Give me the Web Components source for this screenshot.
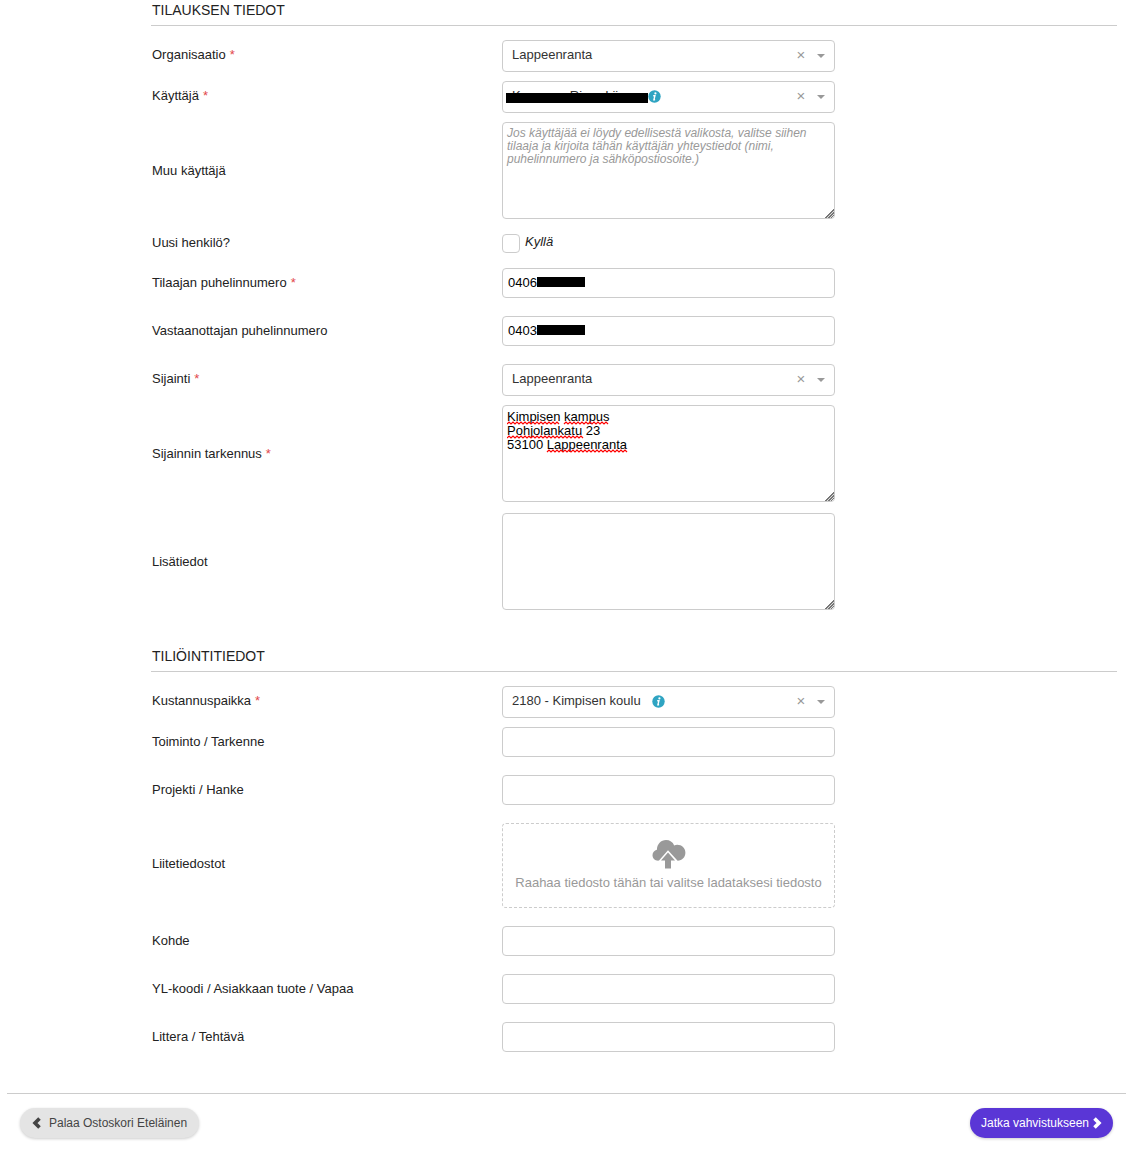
<!DOCTYPE html>
<html lang="fi">
<head>
<meta charset="utf-8">
<title>Tilauksen tiedot</title>
<style>
    body {
        margin: 0;
        background: #fff;
        color: #222;
        font: 13px/16px "Liberation Sans", Arial, sans-serif;
    }
</style>
</head>
<body>
<order-page>
    <form-section heading="Tilauksen tiedot">
        <select-field label="Organisaatio" required value="Lappeenranta"></select-field>
        <select-field label="Käyttäjä" required value="Kxxxxxxx Rixxx Liixx" info masked></select-field>
        <area-field label="Muu käyttäjä" placeholder="Jos käyttäjää ei löydy edellisestä valikosta, valitse siihen&#10;tilaaja ja kirjoita tähän käyttäjän yhteystiedot (nimi,&#10;puhelinnumero ja sähköpostiosoite.)"></area-field>
        <check-field label="Uusi henkilö?" text="Kyllä"></check-field>
        <text-field label="Tilaajan puhelinnumero" required value="0406000000" masked></text-field>
        <text-field label="Vastaanottajan puhelinnumero" value="0403000000" masked></text-field>
        <select-field label="Sijainti" required value="Lappeenranta"></select-field>
        <area-field label="Sijainnin tarkennus" required value="Kimpisen kampus&#10;Pohjolankatu 23&#10;53100 Lappeenranta" misspelt="Kimpisen kampus Pohjolankatu Lappeenranta"></area-field>
        <area-field label="Lisätiedot"></area-field>
    </form-section>
    <form-section heading="Tiliöintitiedot">
        <select-field label="Kustannuspaikka" required value="2180 - Kimpisen koulu" info></select-field>
        <text-field label="Toiminto / Tarkenne"></text-field>
        <text-field label="Projekti / Hanke"></text-field>
        <file-field label="Liitetiedostot" text="Raahaa tiedosto tähän tai valitse ladataksesi tiedosto"></file-field>
        <text-field label="Kohde"></text-field>
        <text-field label="YL-koodi / Asiakkaan tuote / Vapaa"></text-field>
        <text-field label="Littera / Tehtävä"></text-field>
    </form-section>
    <pill-button slot="footer" kind="back">Palaa Ostoskori Eteläinen</pill-button>
    <pill-button slot="footer" kind="next">Jatka vahvistukseen</pill-button>
</order-page>

<script>
const infoIcon = `<svg class="info" width="13" height="13" viewBox="0 0 13 13" aria-hidden="true">
  <circle cx="6.5" cy="6.5" r="6.2" fill="#2fa4c2"/>
  <circle cx="7.4" cy="3.4" r="1.1" fill="#fff"/>
  <path d="M5.2 5.8h1.7l-1 4h1.2" fill="none" stroke="#fff" stroke-width="1.4"/>
</svg>`;
const caretIcon = `<svg class="caret" width="8" height="4" viewBox="0 0 8 4" aria-hidden="true">
  <path d="M0 0h8L4 4z" fill="#999"/>
</svg>`;
const cloudIcon = `<svg width="34" height="30" viewBox="0 0 34 30" aria-hidden="true">
  <path d="M7 21.600C3 22 .5 19.400.5 16.200c0-2.800 1.800-4.800 4.400-5.400C5 5 9 1 14 1c3.800 0 6.800 2 8.200 5.400C23.200 6 24.200 5.800 25.200 5.800c4.600 0 8.200 3.400 8.200 8 0 4.400-3.200 7.700-7.800 7.900L16 11.300z" fill="#999"/>
  <path d="M16 13.600l7 7.800h-4v8.200h-6v-8.200H9z" fill="#999"/>
</svg>`;
const leftIcon = `<svg width="9" height="12" viewBox="0 0 9 12" aria-hidden="true">
  <path d="M7.500 1.500L3 6l4.500 4.500" fill="none" stroke="currentColor" stroke-width="3.600"/>
</svg>`;
const rightIcon = `<svg width="9" height="12" viewBox="0 0 9 12" aria-hidden="true">
  <path d="M1.500 1.500L6 6l-4.500 4.500" fill="none" stroke="currentColor" stroke-width="3.600"/>
</svg>`;

class OrderPage extends HTMLElement {
    constructor() {
        super();
        this.attachShadow({mode: 'open'});
        this.shadowRoot.innerHTML = `
        <style>
            :host {
                display: block;
            }
            form {
                display: flex;
                flex-direction: column;
                gap: 25px;
                padding: 0 11px 0 151px;
            }
            footer {
                display: flex;
                justify-content: space-between;
                margin: 23px 2px 0 7px;
                padding: 14px 13px;
                border-top: 1px solid #ccc;
            }
        </style>
        <form><slot></slot></form>
        <footer><slot name="footer"></slot></footer>
        `;
    }
}
customElements.define('order-page', OrderPage);

class FormSection extends HTMLElement {
    constructor() {
        super();
        this.attachShadow({mode: 'open'});
        this.shadowRoot.innerHTML = `
        <style>
            :host {
                display: block;
            }
            h2 {
                margin: 0 0 14px;
                padding: 0 0 5px 1px;
                border-bottom: 1px solid #ccc;
                font-size: 14px;
                font-weight: normal;
                line-height: 20px;
                text-transform: uppercase;
            }
        </style>
        <h2></h2>
        <slot></slot>
        `;
    }
    connectedCallback() {
        this.shadowRoot.querySelector('h2').textContent = this.getAttribute('heading');
    }
}
customElements.define('form-section', FormSection);

// Shared row: label on the left, the control of the subclass on the right
class FormField extends HTMLElement {
    constructor() {
        super();
        this.attachShadow({mode: 'open'});
    }
    connectedCallback() {
        const star = this.hasAttribute('required') ? '<span class="star">*</span>' : '';
        this.shadowRoot.innerHTML = `
        <style>
            :host {
                display: grid;
                grid-template-columns: 351fr 333fr 282fr;
                align-items: center;
                margin-bottom: 18px;
            }
            * {
                box-sizing: border-box;
            }
            .name {
                padding-left: 1px;
            }
            .star {
                margin-left: 4px;
                color: #e2474b;
            }
            .control {
                position: relative;
                display: flex;
            }
            input, select, textarea {
                margin: 0;
                border: 1px solid #ccc;
                border-radius: 4px;
                background: #fff;
                color: #000;
                font: inherit;
            }
            .mask {
                position: absolute;
                height: 10px;
                background: #000;
            }
            ${this.styles()}
        </style>
        <label class="name" for="field">${this.getAttribute('label')}${star}</label>
        <div class="control">${this.control()}</div>
        `;
    }
    get value() {
        return this.getAttribute('value') || '';
    }
    get mask() {
        return this.hasAttribute('masked') ? '<span class="mask"></span>' : '';
    }
    styles() {
        return '';
    }
}

class TextField extends FormField {
    styles() {
        return `
            input {
                width: 100%;
                height: 30px;
                padding: 0 5px 2px;
            }
            .mask {
                top: 9px;
                left: 35px;
                width: 48px;
            }
        `;
    }
    control() {
        return `<input id="field" type="text" value="${this.value}">${this.mask}`;
    }
}
customElements.define('text-field', TextField);

class SelectField extends FormField {
    styles() {
        return `
            :host {
                margin-bottom: 9px;
            }
            .name {
                padding-bottom: 3px;
            }
            select {
                width: 100%;
                height: 32px;
                padding: 0 50px 2px 9px;
                appearance: none;
                color: #333;
            }
            .mask {
                top: 12px;
                left: 4px;
                width: 142px;
            }
            .info {
                position: absolute;
                top: 9px;
                left: 150px;
            }
            :host([masked]) .info {
                left: 146px;
            }
            .tools {
                position: absolute;
                inset: 0 10px 0 auto;
                display: flex;
                align-items: center;
                gap: 8px;
                pointer-events: none;
            }
            button {
                width: 16px;
                margin: 0;
                padding: 0 0 3px;
                border: 0;
                background: none;
                color: #999;
                font: inherit;
                font-size: 15px;
                pointer-events: auto;
            }
        `;
    }
    control() {
        return `<select id="field"><option>${this.value}</option></select>
            ${this.hasAttribute('info') ? infoIcon : ''}${this.mask}
            <div class="tools"><button type="button" aria-label="Tyhjennä">×</button>${caretIcon}</div>`;
    }
}
customElements.define('select-field', SelectField);

class AreaField extends FormField {
    styles() {
        return `
            :host {
                margin-bottom: 11px;
            }
            textarea {
                width: 100%;
                height: 97px;
                padding: 4px;
                line-height: 14px;
            }
            textarea::placeholder {
                color: #999;
                font-size: 12px;
                font-style: italic;
                line-height: 13px;
            }
            textarea::-webkit-resizer {
                background: linear-gradient(135deg, transparent 68%, #777 68% 74%, #ddd 74% 78%, #777 78% 84%, #ddd 84% 88%, #777 88% 92%, transparent 92%);
            }
            .marks {
                position: absolute;
                top: 5px;
                left: 5px;
                pointer-events: none;
            }
        `;
    }
    control() {
        return `<textarea id="field" spellcheck="false" placeholder="${this.getAttribute('placeholder') || ''}">${this.value}</textarea>
            ${this.spellingMarks()}`;
    }
    // Wavy lines under the misspelt words, placed by measuring the text
    spellingMarks() {
        if (!this.hasAttribute('misspelt')) {
            return '';
        }
        const words = this.getAttribute('misspelt').split(' ');
        const ctx = document.createElement('canvas').getContext('2d');
        ctx.font = '13px "Liberation Sans", Arial, sans-serif';
        let path = '';
        this.value.split('\n').forEach((line, row) => {
            words.filter((word) => line.includes(word)).forEach((word) => {
                const start = Math.round(ctx.measureText(line.slice(0, line.indexOf(word))).width);
                const steps = Math.round(ctx.measureText(word).width / 4);
                path += `M${start} ${row * 14 + 14}` + 'l2-2l2 2'.repeat(steps);
            });
        });
        return `<svg class="marks" width="320" height="48" aria-hidden="true">
            <path d="${path}" fill="none" stroke="#f00" stroke-width="1.200"/>
        </svg>`;
    }
}
customElements.define('area-field', AreaField);

class CheckField extends FormField {
    styles() {
        return `
            :host {
                margin-bottom: 11px;
                padding: 4px 0;
            }
            .name {
                padding-bottom: 2px;
            }
            .control {
                gap: 5px;
            }
            input {
                width: 18px;
                height: 19px;
                appearance: none;
            }
            input:checked {
                background: #5a36d6;
            }
            .text {
                font-style: italic;
            }
        `;
    }
    control() {
        return `<input id="field" type="checkbox"><label class="text" for="field">${this.getAttribute('text')}</label>`;
    }
}
customElements.define('check-field', CheckField);

class FileField extends FormField {
    styles() {
        return `
            .name {
                padding-bottom: 3px;
            }
            .drop {
                display: flex;
                flex: 1;
                flex-direction: column;
                align-items: center;
                gap: 6px;
                height: 85px;
                padding-top: 15px;
                border: 1px dashed #ccc;
                border-radius: 4px;
                color: #999;
            }
            input {
                position: absolute;
                inset: 0;
                width: 100%;
                opacity: 0;
            }
        `;
    }
    control() {
        return `<label class="drop" for="field">${cloudIcon}<span>${this.getAttribute('text')}</span></label>
            <input id="field" type="file">`;
    }
}
customElements.define('file-field', FileField);

class PillButton extends HTMLElement {
    constructor() {
        super();
        this.attachShadow({mode: 'open'});
    }
    connectedCallback() {
        const back = this.getAttribute('kind') === 'back';
        this.shadowRoot.innerHTML = `
        <style>
            :host {
                display: block;
            }
            button {
                display: flex;
                align-items: center;
                gap: 8px;
                min-width: 179px;
                height: 30px;
                padding: 0 12px;
                border: 0;
                border-radius: 15px;
                background: #e4e4e4;
                box-shadow: 0 1px 3px rgba(0, 0, 0, .2);
                color: #444;
                font: inherit;
                font-size: 12px;
            }
            :host([kind="next"]) button {
                gap: 4px;
                justify-content: center;
                min-width: 143px;
                padding: 0 10px;
                background: #5a36d6;
                color: #fff;
            }
        </style>
        <button type="button">${back ? leftIcon : ''}<slot></slot>${back ? '' : rightIcon}</button>
        `;
    }
}
customElements.define('pill-button', PillButton);
</script>
</body>
</html>
